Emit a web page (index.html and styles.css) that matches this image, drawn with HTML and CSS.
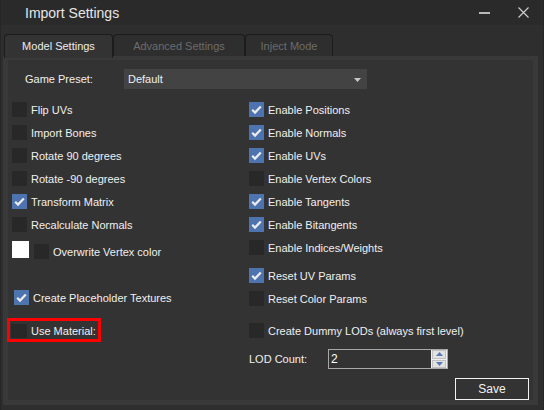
FILE: index.html
```html
<!DOCTYPE html>
<html>
<head>
<meta charset="utf-8">
<link rel="stylesheet" href="styles.css">
</head>
<body>
<div class="window">
  <div class="titlebar">
    <span class="title">Import Settings</span>
    <div class="controls">
      <span class="min"></span>
      <svg class="close" width="11" height="11" viewBox="0 0 11 11"><path d="M0.5 0.5 L10.5 10.5 M10.5 0.5 L0.5 10.5" stroke="#d0d0d0" stroke-width="1.1" fill="none"/></svg>
    </div>
  </div>
  <div class="body">
    <div class="tabs">
      <div class="tab active t1">Model Settings</div>
      <div class="tab t2">Advanced Settings</div>
      <div class="tab t3">Inject Mode</div>
    </div>
    <div class="panel">
      <div class="preset-row">
        <span class="preset-label">Game Preset:</span>
        <div class="select"><span>Default</span>
          <svg class="arrow" width="7" height="4" viewBox="0 0 7 4"><path d="M0 0 H7 L3.5 4 Z" fill="#c8c8c8"/></svg>
        </div>
      </div>
      <div class="columns">
        <div class="col left">
          <div class="row"><span class="cb"></span><span>Flip UVs</span></div>
          <div class="row"><span class="cb"></span><span>Import Bones</span></div>
          <div class="row"><span class="cb"></span><span>Rotate 90 degrees</span></div>
          <div class="row"><span class="cb"></span><span>Rotate -90 degrees</span></div>
          <div class="row"><span class="cb on"><svg viewBox="0 0 15 15"><path d="M3.2 7.8 L6 10.6 L11.8 4.6" stroke="#ececec" stroke-width="2.2" fill="none"/></svg></span><span>Transform Matrix</span></div>
          <div class="row"><span class="cb"></span><span>Recalculate Normals</span></div>
          <div class="row overwrite"><span class="swatch"></span><span class="cb low"></span><span>Overwrite Vertex color</span></div>
          <div class="row placeholder"><span class="cb on"><svg viewBox="0 0 15 15"><path d="M3.2 7.8 L6 10.6 L11.8 4.6" stroke="#ececec" stroke-width="2.2" fill="none"/></svg></span><span>Create Placeholder Textures</span></div>
          <div class="row material"><span class="cb big"></span><span>Use Material:</span></div>
        </div>
        <div class="col right">
          <div class="row"><span class="cb on"><svg viewBox="0 0 15 15"><path d="M3.2 7.8 L6 10.6 L11.8 4.6" stroke="#ececec" stroke-width="2.2" fill="none"/></svg></span><span>Enable Positions</span></div>
          <div class="row"><span class="cb on"><svg viewBox="0 0 15 15"><path d="M3.2 7.8 L6 10.6 L11.8 4.6" stroke="#ececec" stroke-width="2.2" fill="none"/></svg></span><span>Enable Normals</span></div>
          <div class="row"><span class="cb on"><svg viewBox="0 0 15 15"><path d="M3.2 7.8 L6 10.6 L11.8 4.6" stroke="#ececec" stroke-width="2.2" fill="none"/></svg></span><span>Enable UVs</span></div>
          <div class="row"><span class="cb"></span><span>Enable Vertex Colors</span></div>
          <div class="row"><span class="cb on"><svg viewBox="0 0 15 15"><path d="M3.2 7.8 L6 10.6 L11.8 4.6" stroke="#ececec" stroke-width="2.2" fill="none"/></svg></span><span>Enable Tangents</span></div>
          <div class="row"><span class="cb on"><svg viewBox="0 0 15 15"><path d="M3.2 7.8 L6 10.6 L11.8 4.6" stroke="#ececec" stroke-width="2.2" fill="none"/></svg></span><span>Enable Bitangents</span></div>
          <div class="row"><span class="cb"></span><span>Enable Indices/Weights</span></div>
          <div class="row reset-uv"><span class="cb on"><svg viewBox="0 0 15 15"><path d="M3.2 7.8 L6 10.6 L11.8 4.6" stroke="#ececec" stroke-width="2.2" fill="none"/></svg></span><span>Reset UV Params</span></div>
          <div class="row"><span class="cb"></span><span>Reset Color Params</span></div>
          <div class="row dummy"><span class="cb"></span><span>Create Dummy LODs (always first level)</span></div>
          <div class="lod-row">
            <span class="lod-label">LOD Count:</span>
            <div class="spin">
              <span class="spin-val">2</span>
              <div class="spin-btns">
                <span class="sbtn"><svg width="7" height="4" viewBox="0 0 7 4"><path d="M0 4 H7 L3.5 0 Z" fill="#5a78b0"/></svg></span>
                <span class="sbtn"><svg width="7" height="4" viewBox="0 0 7 4"><path d="M0 0 H7 L3.5 4 Z" fill="#5a78b0"/></svg></span>
              </div>
            </div>
          </div>
          <div class="save">Save</div>
        </div>
      </div>
    </div>
  </div>
</div>
</body>
</html>
```
FILE: styles.css
```css
html, body {
  margin: 0;
  padding: 0;
  background: #2e2e2e;
}
.window {
  width: 544px;
  height: 410px;
  background: #2e2e2e;
  font-family: "Liberation Sans", Arial, sans-serif;
  font-size: 11px;
  color: #f0f0f0;
  box-sizing: border-box;
  border-left: 1px solid #262626;
  border-right: 1px solid #262626;
  overflow: hidden;
}
.titlebar {
  height: 25px;
  background: #2a2a2a;
  display: flex;
  align-items: center;
  justify-content: space-between;
}
.title {
  font-size: 14px;
  color: #e6e6e6;
  margin-left: 24px;
  margin-top: 1px;
}
.controls {
  display: flex;
  align-items: center;
  margin-right: 14px;
}
.min {
  width: 11px;
  height: 2px;
  background: #b8b8b8;
  margin-right: 28px;
}
.close {
  display: block;
}
.body {
  padding: 9px 5px 0 2px;
}
.tabs {
  display: flex;
  height: 22px;
  padding-left: 1px;
}
.tab {
  box-sizing: border-box;
  height: 22px;
  border: 1px solid #1c1c1c;
  border-bottom: none;
  border-radius: 4px 4px 0 0;
  display: flex;
  align-items: center;
  justify-content: center;
  color: #6c6c6c;
  background: #2e2e2e;
}
.tab.active {
  background: #333333;
  color: #ececec;
  height: 24px;
  position: relative;
  z-index: 1;
  padding-bottom: 2px;
}
.t1 { width: 109px; }
.t2 { width: 132px; }
.t3 { width: 88px; }
.panel {
  width: 535px;
  height: 349px;
  box-sizing: border-box;
  border: 5px solid #393939;
  border-top-width: 4px;
  background: #333333;
}
.preset-row {
  display: flex;
  align-items: center;
  margin-top: 9px;
  height: 20px;
}
.preset-label {
  margin-left: 17px;
  width: 99px;
}
.select {
  width: 243px;
  height: 20px;
  background: #434343;
  display: flex;
  align-items: center;
  justify-content: space-between;
  box-sizing: border-box;
  padding: 0 6px 0 4px;
}
.arrow {
  display: block;
  margin-top: 1px;
}
.columns {
  display: flex;
  margin-top: 9px;
}
.col {
  display: flex;
  flex-direction: column;
}
.left {
  width: 237px;
  padding-left: 4px;
}
.right {
  width: 284px;
}
.row {
  display: flex;
  align-items: center;
  height: 23px;
  gap: 4px;
  white-space: nowrap;
}
.cb {
  width: 15px;
  height: 15px;
  background: #282828;
  flex: none;
  display: block;
}
.cb.on {
  background: #4e74b0;
}
.cb svg {
  display: block;
  width: 15px;
  height: 15px;
}
.cb.low {
  margin-left: 5px;
}
.cb.big {
  width: 16px;
  height: 14px;
}
.swatch {
  width: 17px;
  height: 17px;
  background: #ffffff;
  flex: none;
  margin-bottom: 4px;
}
.overwrite {
  gap: 0;
  margin-top: 4px;
}
.overwrite .cb + span {
  margin-left: 4px;
}
.placeholder {
  margin-top: 23px;
  margin-left: 2px;
}
.material {
  margin-top: 9px;
  margin-left: -5px;
  width: 94px;
  height: 24px;
  box-sizing: border-box;
  border: 3px solid #ff0000;
  padding-left: 1px;
  padding-top: 1px;
}
.reset-uv {
  margin-top: 5px;
}
.dummy {
  margin-top: 9px;
}
.lod-row {
  display: flex;
  align-items: center;
  margin-top: 7px;
  height: 20px;
}
.lod-label {
  width: 79px;
}
.spin {
  width: 120px;
  height: 20px;
  box-sizing: border-box;
  border: 1px solid #a8a8a8;
  display: flex;
  align-items: center;
  justify-content: space-between;
}
.spin-val {
  padding-left: 2px;
  font-size: 12px;
  color: #ffffff;
}
.spin-btns {
  display: flex;
  flex-direction: column;
  width: 16px;
  height: 18px;
  background: #f0f0f0;
  gap: 1px;
  box-sizing: border-box;
  padding: 0 1px;
}
.sbtn {
  flex: 1;
  display: flex;
  align-items: center;
  justify-content: center;
  background: #e2e2e2;
  border: 1px solid #c0c0c0;
  box-sizing: border-box;
}
.sbtn svg {
  display: block;
}
.save {
  align-self: flex-end;
  margin-right: 4px;
  margin-top: 9px;
  width: 74px;
  height: 22px;
  box-sizing: border-box;
  border: 1px solid #f2f2f2;
  display: flex;
  align-items: center;
  justify-content: center;
  font-size: 12px;
  color: #f2f2f2;
}
```
